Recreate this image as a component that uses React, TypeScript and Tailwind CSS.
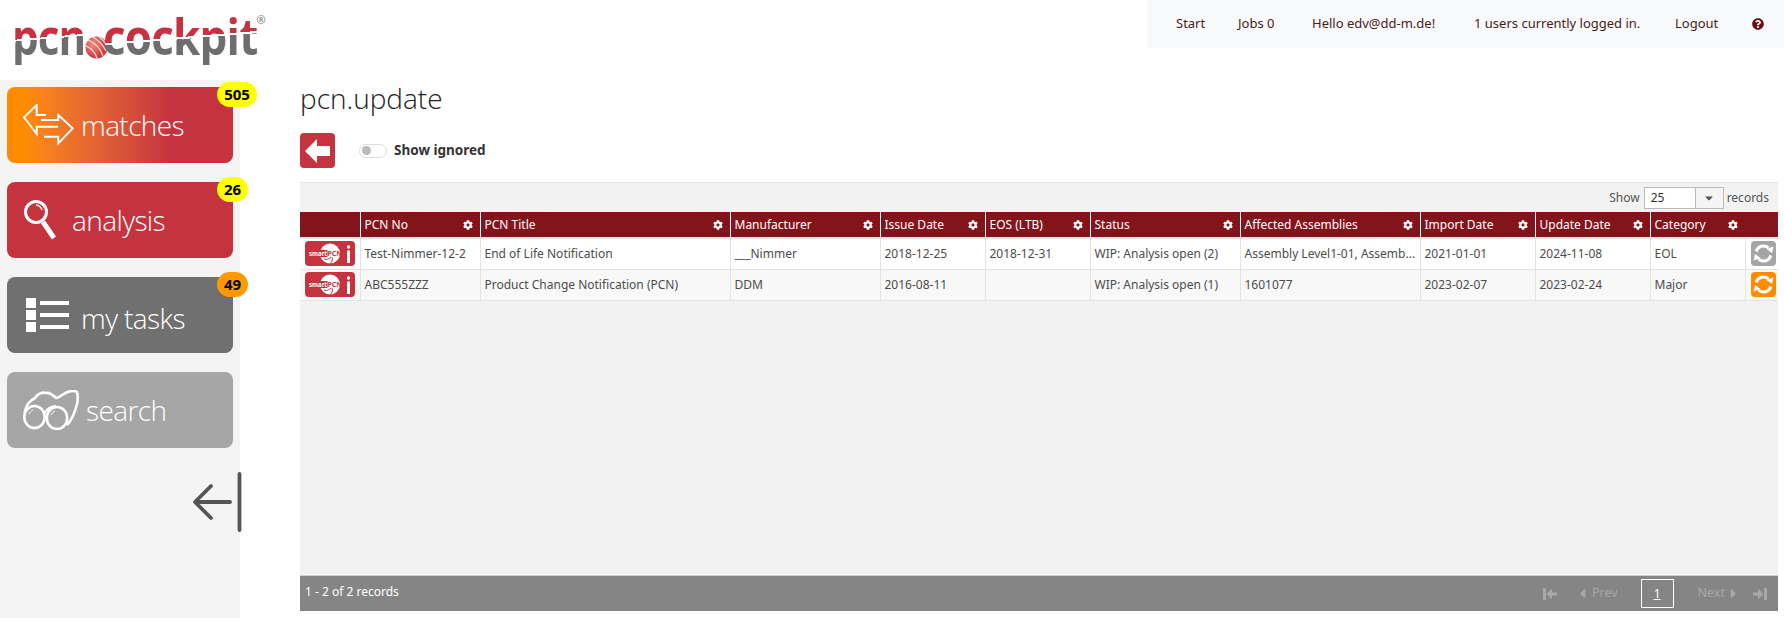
import React from "react";
import { FaCog, FaQuestionCircle, FaCaretDown, FaCaretLeft, FaCaretRight } from "react-icons/fa";

const font = { fontFamily: '"Noto Sans", "Open Sans", sans-serif' };
const logoText =
  "inline-block font-bold text-[44px] leading-[52px] text-transparent bg-clip-text bg-[linear-gradient(176deg,#c8313f_52%,#ffffff_52%,#ffffff_55%,#6e6e6e_55%)]";

function Ball() {
  return (
    <svg width="23" height="23" viewBox="0 0 23 23" className="shrink-0">
      <defs>
        <radialGradient id="b" cx="35%" cy="35%" r="75%">
          <stop offset="0" stopColor="#f08a80" />
          <stop offset="1" stopColor="#c22a30" />
        </radialGradient>
      </defs>
      <circle cx="11.5" cy="11.5" r="11" fill="url(#b)" />
      <g fill="none" stroke="#fff" strokeWidth="1.3" opacity=".8">
        <path d="M3 4c5 2 12 7 15 16" />
        <path d="M8 1c5 3 10 8 13 14" />
        <path d="M1 10c5 2 9 6 11 12" />
        <path d="M14 1c3 2 6 5 8 8" />
      </g>
    </svg>
  );
}

function Logo() {
  return (
    <div className="flex items-start w-[240px] pl-[12px] pt-[6px]">
      <span className={`${logoText} origin-top-left scale-x-[0.96] scale-y-[1.14] tracking-[-1px] w-[74px]`} style={{ fontFamily: '"Open Sans", sans-serif' }}>pcn</span>
      <span className="mt-[30px] -ml-[1px] mr-[-5px]"><Ball /></span>
      <span className={`${logoText} origin-top scale-y-[1.14] tracking-[-0.8px]`} style={{ fontFamily: '"Open Sans", sans-serif' }}>cockpit</span>
      <span className="text-[11px] leading-none text-[#777] mt-[8px] -ml-[1px]">®</span>
    </div>
  );
}

function MatchesIcon() {
  return (
    <svg width="51" height="42" viewBox="0 0 51 42" fill="none" stroke="#fff" strokeWidth="1.9" strokeLinejoin="miter">
      <path d="M23 11H13.7V1L1 13.3 13.7 30V22.7H35" />
      <path d="M18 16H35.3V11L49.7 24.3 35.3 39.3V32.7H21" />
    </svg>
  );
}
function AnalysisIcon() {
  return (
    <svg width="34" height="42" viewBox="0 0 34 42" fill="none" stroke="#fff">
      <circle cx="13" cy="13" r="10.5" strokeWidth="3" />
      <path d="M13 6a7 7 0 0 1 6 5" strokeWidth="1.4" />
      <path d="M20 23 31 39" strokeWidth="5" />
    </svg>
  );
}
function TasksIcon() {
  return (
    <span className="pl-[3px] flex">
      <svg width="44" height="34" viewBox="0 0 44 34" fill="#fff">
        <rect x="0" y="0" width="10" height="10" />
        <rect x="0" y="12" width="10" height="10" />
        <rect x="0" y="24" width="10" height="10" />
        <rect x="14" y="3" width="29" height="4" />
        <rect x="14" y="15" width="29" height="4" />
        <rect x="14" y="27" width="29" height="4" />
      </svg>
    </span>
  );
}
function SearchIcon() {
  return (
    <svg width="56" height="40" viewBox="0 0 56 40" fill="none" stroke="#fff" strokeWidth="2.6" strokeLinejoin="round">
      <ellipse cx="11.5" cy="27" rx="10.2" ry="11" />
      <ellipse cx="34" cy="28" rx="10.2" ry="11" />
      <path d="M1.5 23C3 14 8 10 12 8 15 3 20 2 23 3 27 2 31 6 33 8 36 8 38 5 41 4 45 1 51 0 54 2 55 6 55 10 54 14 52 22 50 29 44 35" />
      <path d="M21.5 23C24 19 28 16 33 16" strokeWidth="2" />
      <path d="M6 24c1-2 2-3 4-4M28 25c1-2 2-3 4-4" strokeWidth="1" />
    </svg>
  );
}

function NavButton({ bg, icon, label, badge, badgeBg, badgeW, gap, textCls = "" }: { bg: string; icon: React.ReactNode; label: string; badge?: string; badgeBg?: string; badgeW?: string; gap: string; textCls?: string }) {
  return (
    <div className={`relative flex items-center w-[226px] h-[76px] rounded-lg pl-[16px] mb-[19px] text-white ${bg}`}>
      <span className={`flex items-center shrink-0 ${gap}`}>{icon}</span>
      <span className={`text-[28px] font-light leading-none tracking-[-0.6px] ${textCls}`} style={{ fontFamily: '"Open Sans", sans-serif' }}>{label}</span>
      {badge && (
        <span className={`absolute top-[-5px] left-[210px] h-[25px] rounded-full flex items-center justify-center text-black font-bold text-[15px] ${badgeBg} ${badgeW}`}>{badge}</span>
      )}
    </div>
  );
}

function Sidebar() {
  return (
    <aside className="relative w-[240px] h-[538px] shrink-0 bg-[#f4f4f4] pl-[7px] pt-[7px] flex flex-col">
      <NavButton bg="bg-linear-to-r from-[#ff8c00] from-[8%] to-[#c5333f] to-[72%]" icon={<MatchesIcon />} label="matches" badge="505" badgeBg="bg-[#ffff00]" badgeW="w-[40px]" gap="w-[58px]" />
      <NavButton bg="bg-[#c5333f]" icon={<AnalysisIcon />} label="analysis" badge="26" badgeBg="bg-[#ffff00]" badgeW="w-[31px]" gap="w-[49px]" />
      <NavButton bg="bg-[#707070]" icon={<TasksIcon />} label="my tasks" badge="49" badgeBg="bg-[#ff9900]" badgeW="w-[31px]" gap="w-[58px]" textCls="mt-[6px]" />
      <NavButton bg="bg-[#a6a6a6]" icon={<SearchIcon />} label="search" gap="w-[63px]" />
      <div className="self-end mt-[5px] -mr-[2px] flex">
        <svg width="50" height="60" viewBox="0 0 50 60" fill="none" stroke="#555" strokeLinecap="round">
          <path d="M38 30H3M19 14 3 30 19 46" strokeWidth="3.8" strokeLinejoin="round" />
          <path d="M47.5 2V58" strokeWidth="3.8" />
        </svg>
      </div>
    </aside>
  );
}

function TopNav() {
  const items: [string, string][] = [
    ["Start", "w-[62px]"],
    ["Jobs 0", "w-[74px]"],
    ["Hello edv@dd-m.de!", "w-[162px]"],
    ["1 users currently logged in.", "w-[201px]"],
    ["Logout", "w-[77px]"],
  ];
  return (
    <nav className="ml-auto w-[637px] h-[48px] bg-[#f8f9fa] flex items-center pl-[29px] text-[13px] text-[#4b1a1a]">
      {items.map(([t, w]) => (
        <span key={t} className={`${w} whitespace-nowrap`}>{t}</span>
      ))}
      <FaQuestionCircle className="text-[#6b0f14] text-[12px]" />
    </nav>
  );
}

function SmartButton() {
  return (
    <div className="w-[50px] h-[25px] bg-[#c5333f] rounded-[4px] flex items-center justify-center gap-[3px] mx-auto">
      <svg width="35" height="21" viewBox="0 0 35 21">
        <circle cx="22" cy="10.5" r="10" fill="#fff" />
        <rect x="0" y="7" width="19.5" height="7" fill="#c5333f" />
        <path d="M24 14c1 3 0 5-2 7M16 16c3 1 5 0 7-2" fill="none" stroke="#c5333f" strokeWidth="1" />
        <text x="1" y="12.8" textLength="18" lengthAdjust="spacingAndGlyphs" fontSize="7" fontWeight="700" fill="#fff" fontFamily="Noto Sans, sans-serif">smart</text>
        <text x="19.5" y="12.8" textLength="14.5" lengthAdjust="spacingAndGlyphs" fontSize="7" fontWeight="700" fill="#c5333f" fontFamily="Noto Sans, sans-serif">PCN</text>
      </svg>
      <svg width="5" height="18" viewBox="0 0 5 18" fill="#fff">
        <circle cx="2.5" cy="2" r="1.7" />
        <rect x="1" y="5.5" width="3" height="12.5" />
      </svg>
    </div>
  );
}

function RefreshButton({ bg }: { bg: string }) {
  return (
    <div className={`w-[25px] h-[25px] rounded-[4px] flex items-center justify-center ${bg}`}>
      <svg width="21" height="21" viewBox="0 0 21 21" fill="none" stroke="#fff" strokeWidth="3">
        <path d="M3.2 8.5A7.6 7.6 0 0 1 15.5 4.8" />
        <path d="M17.8 12.5A7.6 7.6 0 0 1 5.5 16.2" />
        <path d="M13.5 6 20.5 3.5 19 10Z" fill="#fff" stroke="none" />
        <path d="M7.5 15 0.5 17.5 2 11Z" fill="#fff" stroke="none" />
      </svg>
    </div>
  );
}

function EdgeArrow({ flip }: { flip?: boolean }) {
  return (
    <svg width="14" height="12" viewBox="0 0 14 12" fill="#a8a8a8" className={flip ? "rotate-180" : ""}>
      <rect x="0" y="0" width="3" height="12" />
      <path d="M3.5 6 9 0.5V4.5H14V7.5H9V11.5Z" />
    </svg>
  );
}

const columns = [
  { w: "w-[60px]", t: "" },
  { w: "w-[120px]", t: "PCN No" },
  { w: "w-[250px]", t: "PCN Title" },
  { w: "w-[150px]", t: "Manufacturer" },
  { w: "w-[105px]", t: "Issue Date" },
  { w: "w-[105px]", t: "EOS (LTB)" },
  { w: "w-[150px]", t: "Status" },
  { w: "w-[180px]", t: "Affected Assemblies" },
  { w: "w-[115px]", t: "Import Date" },
  { w: "w-[115px]", t: "Update Date" },
  { w: "w-[95px]", t: "Category" },
  { w: "w-[33px]", t: "" },
];

const rows = [
  { c: ["Test-Nimmer-12-2", "End of Life Notification", "___Nimmer", "2018-12-25", "2018-12-31", "WIP: Analysis open (2)", "Assembly Level1-01, Assemb...", "2021-01-01", "2024-11-08", "EOL"], bg: "bg-white", btn: "bg-[#a5a5a5]" },
  { c: ["ABC555ZZZ", "Product Change Notification (PCN)", "DDM", "2016-08-11", "", "WIP: Analysis open (1)", "1601077", "2023-02-07", "2023-02-24", "Major"], bg: "bg-[#f8f8f8]", btn: "bg-[#ff8c00]" },
];

function Grid() {
  return (
    <div className="flex-1 flex flex-col mr-[6px] bg-[#f2f2f2] border-t border-[#e3e3e3]">
      <div className="h-[29px] flex items-center justify-end gap-[3px] pr-[9px] text-[12px] text-[#555]">
        <span>Show</span>
        <div className="w-[80px] h-[22px] border border-[#bbb] bg-white flex items-center text-[#333] ml-[1px]">
          <span className="flex-1 pl-[6px]">25</span>
          <span className="w-[28px] h-full border-l border-[#bbb] bg-[#f4f4f4] flex items-center justify-center"><FaCaretDown className="text-[#555] text-[12px]" /></span>
        </div>
        <span>records</span>
      </div>
      <table className="table-fixed w-full border-collapse text-[12px]">
        <colgroup>
          {columns.map((c, i) => <col key={i} className={c.w} />)}
        </colgroup>
        <thead>
          <tr className="h-[26px] bg-[#84141b] text-white">
            {columns.map((c, i) => (
              <th key={i} className={`p-0 pl-[4px] font-normal text-left border-b-[2px] border-b-[#e3e3e3] ${i > 0 && i < 11 ? "border-l border-l-white" : ""}`}>
                {c.t && (
                  <span className="flex items-center justify-between pr-[7px]">
                    <span className="whitespace-nowrap">{c.t}</span>
                    <FaCog className="text-[10px] shrink-0" />
                  </span>
                )}
              </th>
            ))}
          </tr>
        </thead>
        <tbody className="text-[#4c4c4c]">
          {rows.map((r, i) => (
            <tr key={i} className={`h-[31px] ${r.bg}`}>
              <td className="p-0 border-b border-[#e3e3e3]"><SmartButton /></td>
              {r.c.map((v, j) => (
                <td key={j} className="p-0 pl-[4px] border-l border-b border-[#e3e3e3] whitespace-nowrap overflow-hidden">{v}</td>
              ))}
              <td className="p-0 pl-[5px] border-l border-b border-[#e3e3e3]"><RefreshButton bg={r.btn} /></td>
            </tr>
          ))}
        </tbody>
      </table>
      <div className="flex-1" />
      <div className="h-[36px] bg-[#858585] border-t border-[#cfcfcf] flex items-center text-[12px] text-white pl-[5px]">
        <span className="mb-[3px]">1 - 2 of 2 records</span>
        <div className="ml-auto flex items-center text-[#a8a8a8] pr-[11px] text-[12.5px]">
          <span className="mr-[18px]"><EdgeArrow /></span>
          <FaCaretLeft className="text-[15px] mr-[2px]" />
          <span className="mr-[23px]">Prev</span>
          <span className="w-[33px] h-[29px] border border-white text-white underline flex items-center justify-center mr-[24px] text-[12px]">1</span>
          <span className="mr-[1px]">Next</span>
          <FaCaretRight className="text-[15px] mr-[12px]" />
          <EdgeArrow flip />
        </div>
      </div>
    </div>
  );
}

function Main() {
  return (
    <main className="flex-1 flex flex-col pl-[60px] h-[531px]">
      <h1 className="text-[28px] leading-[36px] font-light text-[#222] h-[53px]" style={{ fontFamily: '"Open Sans", sans-serif' }}>pcn.update</h1>
      <div className="flex items-center h-[35px] mb-[14px]">
        <div className="w-[35px] h-[35px] rounded-[4px] bg-[#c5333f] flex items-center justify-center">
          <svg width="26" height="24" viewBox="0 0 26 24" fill="#fff"><path d="M0 12 12 0V7H25V17H12V24Z" /></svg>
        </div>
        <div className="ml-[24px] w-[28px] h-[14px] rounded-full border border-[#ddd] bg-white flex items-center pl-[2px]">
          <span className="w-[9px] h-[9px] rounded-full bg-[#bbb]" />
        </div>
        <span className="ml-[7px] text-[13.5px] font-bold text-[#333]">Show ignored</span>
      </div>
      <Grid />
    </main>
  );
}

export default function App() {
  return (
    <div className="w-[1784px] h-[618px] overflow-hidden bg-white flex flex-col" style={font}>
      <header className="flex items-start h-[80px] shrink-0">
        <Logo />
        <TopNav />
      </header>
      <div className="flex">
        <Sidebar />
        <Main />
      </div>
    </div>
  );
}
